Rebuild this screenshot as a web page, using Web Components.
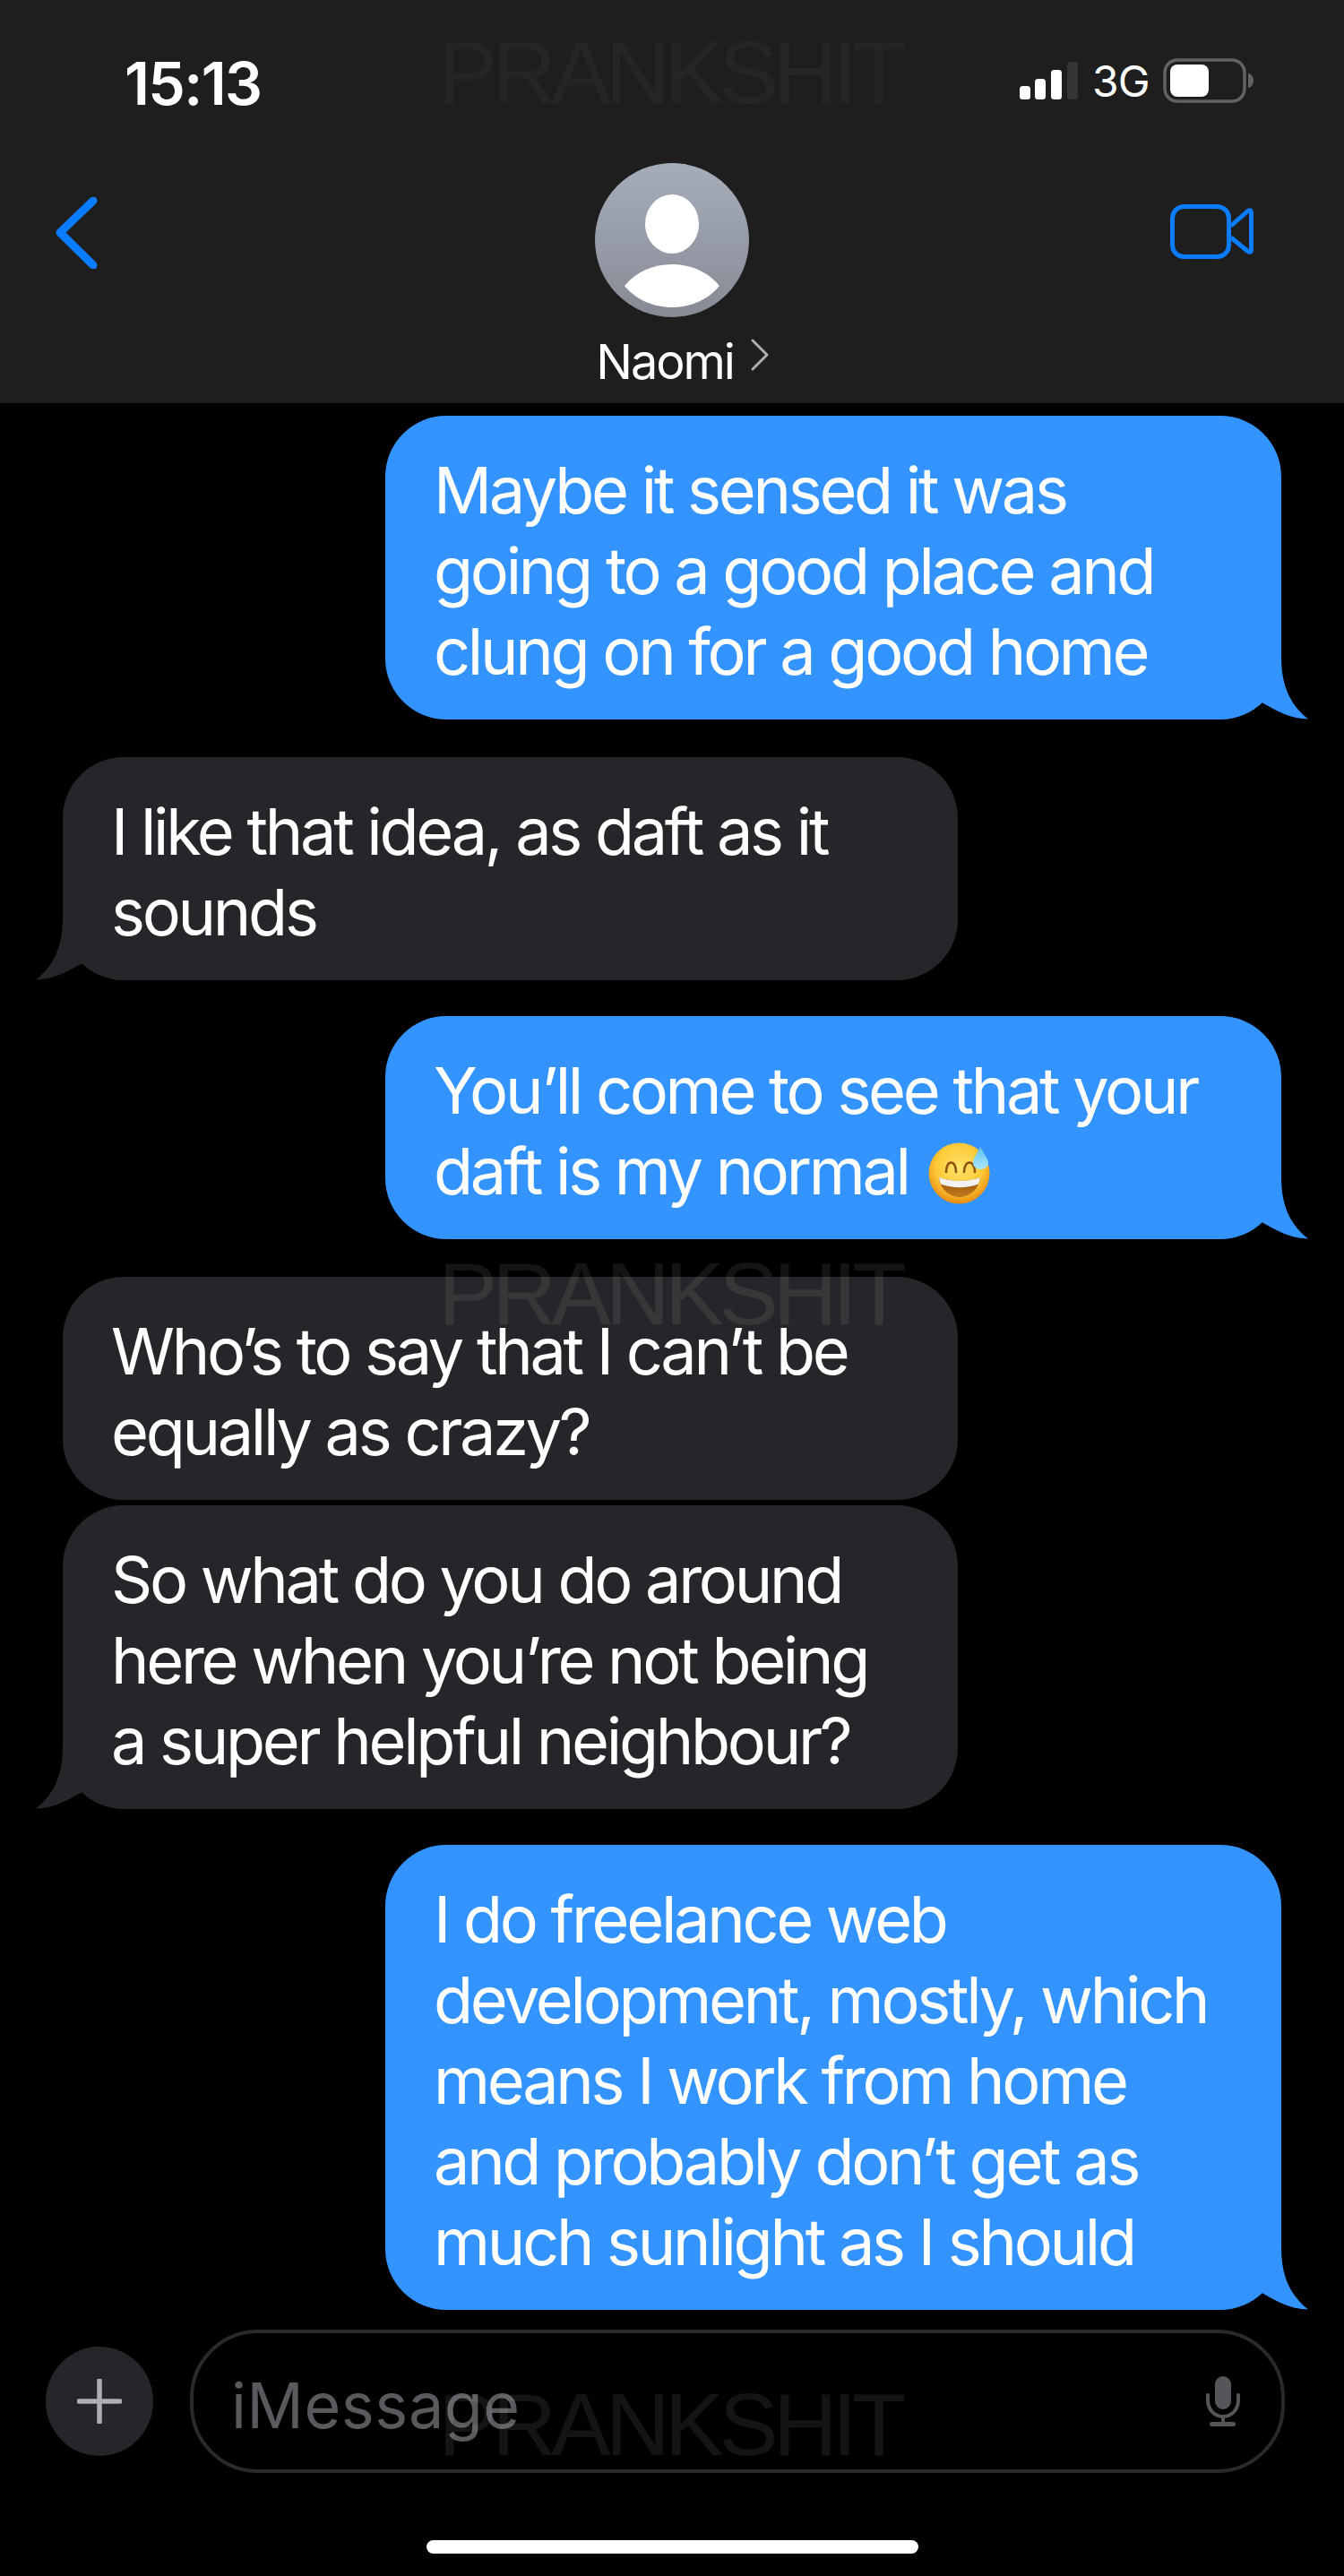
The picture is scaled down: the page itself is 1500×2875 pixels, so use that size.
<!DOCTYPE html>
<html><head><meta charset="utf-8">
<style>
html,body{margin:0;padding:0;background:#000}
body{width:1500px;height:2875px;overflow:hidden;font-family:Inter,"Liberation Sans",sans-serif;color:#fff}
</style></head><body>
<phone-screen>
  <chat-header slot="header" name="Naomi"></chat-header>
  <chat-bubble from="me" style="margin-top:14px">Maybe it sensed it was<br>going to a good place and<br>clung on for a good home</chat-bubble>
  <chat-bubble from="them" style="margin-top:42px">I like that idea, as daft as it<br>sounds</chat-bubble>
  <chat-bubble from="me" style="margin-top:40px">You’ll come to see that your<br>daft is my normal <sweat-emoji></sweat-emoji></chat-bubble>
  <chat-bubble from="them" notail style="margin-top:42px">Who’s to say that I can’t be<br>equally as crazy?</chat-bubble>
  <chat-bubble from="them" style="margin-top:6px">So what do you do around<br>here when you’re not being<br>a super helpful neighbour?</chat-bubble>
  <chat-bubble from="me" style="margin-top:40px">I do freelance web<br>development, mostly, which<br>means I work from home<br>and probably don’t get as<br>much sunlight as I should</chat-bubble>
  <chat-input slot="footer"></chat-input>
  <water-mark slot="overlay" style="top:31px;color:rgba(255,255,255,.035)">PRANKSHIT</water-mark>
  <water-mark slot="overlay" style="top:1394px">PRANKSHIT</water-mark>
  <water-mark slot="overlay" style="top:2656px">PRANKSHIT</water-mark>
</phone-screen>
<script>
function def(name, html){
  customElements.define(name, class extends HTMLElement{
    constructor(){super();this.attachShadow({mode:'open'}).innerHTML=html;}
  });
}
def('phone-screen',`<style>
:host{display:flex;flex-direction:column;position:relative;width:1500px;height:2875px;overflow:hidden;background:#000}
.msgs{display:flex;flex-direction:column;flex:none;height:2150px}
</style>
<slot name="header"></slot>
<div class="msgs"><slot></slot></div>
<slot name="footer"></slot>
<slot name="overlay"></slot>`);

def('water-mark',`<style>
:host{display:block;position:absolute;left:489px;width:530px;height:100px;
font:400 99px/100px "Liberation Sans",sans-serif;color:rgba(255,255,255,.08);white-space:nowrap;letter-spacing:-5.5px;pointer-events:none}
</style><slot></slot>`);

def('chat-header',`<style>
:host{display:block;height:450px;background:#1e1e1e;flex:none;box-sizing:border-box}
.status{display:flex;justify-content:space-between;align-items:flex-start;height:182px;box-sizing:border-box;padding:0 100px 0 139px}
.time{font:600 66px/72px Inter,sans-serif;letter-spacing:-1.6px;margin-top:57px}
.ind{display:flex;align-items:flex-start;margin-top:65px}
.g3{font:400 48px/50px Inter,sans-serif;letter-spacing:-1px;margin:1px 0 0 16px;width:79px;height:50px}
.nav{display:grid;grid-template-columns:1fr 172px 1fr;height:268px}
.back{padding:38px 0 0 60px}
.video{justify-self:end;padding:45px 98px 0 0}
.mid{display:flex;flex-direction:column;align-items:center;position:relative}
.name{display:flex;align-items:flex-start;white-space:nowrap;font:400 54px/60px Inter,sans-serif;letter-spacing:-2.1px;margin-top:20px;margin-left:24px}
.name svg{margin:3px 0 0 18px;flex:none}
svg{display:block}
</style>
<div class="status"><div class="time">15:13</div>
<div class="ind">
<svg width="66" height="46" viewBox="0 0 66 46"><rect x="1" y="31" width="12" height="15" rx="3.5" fill="#fff"/><rect x="18" y="23" width="12" height="23" rx="3.5" fill="#fff"/><rect x="36" y="13" width="12" height="33" rx="3.5" fill="#fff"/><rect x="54" y="4" width="12" height="42" rx="3.5" fill="#343434"/></svg>
<div class="g3">3G</div>
<svg width="102" height="50" viewBox="0 0 102 50"><rect x="2" y="2" width="89" height="46" rx="14" fill="none" stroke="#636363" stroke-width="3.5"/><rect x="8" y="7" width="43" height="36" rx="8" fill="#fff"/><path d="M95 17c3.5.5 6 3.5 6 8s-2.500 7.500-6 8z" fill="#636363"/></svg>
</div></div>
<div class="nav">
<div class="back"><svg width="50" height="80" viewBox="0 0 50 80"><path d="M44 4 7 39.5 44 76" fill="none" stroke="#0a7cff" stroke-width="9" stroke-linecap="round" stroke-linejoin="round"/></svg></div>
<div class="mid">
<svg width="172" height="172" viewBox="0 0 172 172"><defs><linearGradient id="av" x1="0" y1="0" x2="0" y2="1"><stop offset="0" stop-color="#a6adba"/><stop offset="1" stop-color="#868a95"/></linearGradient></defs><circle cx="86" cy="86" r="86" fill="url(#av)"/><ellipse cx="86" cy="68" rx="30" ry="33" fill="#fff"/><path d="M33 137C46 121 65 113 86 113s40 8 53 24c-12 15-32 24-53 24s-41-9-53-24z" fill="#fff"/></svg>
<div class="name">Naomi<svg width="22" height="38" viewBox="0 0 22 38"><path d="M3 3 19 19 3 35" fill="none" stroke="#b0b0b0" stroke-width="3" stroke-linecap="round" stroke-linejoin="round"/></svg></div>
</div>
<div class="video"><svg width="98" height="66" viewBox="0 0 98 66"><rect x="4.5" y="3.5" width="63" height="56" rx="13" fill="none" stroke="#0a7cff" stroke-width="5"/><path d="M71 24 88 9Q92.5 5.5 92.5 11V51Q92.5 56.5 88 53L71 39" fill="none" stroke="#0a7cff" stroke-width="5" stroke-linejoin="round" stroke-linecap="round"/></svg></div>
</div>`);

def('sweat-emoji',`<style>
:host{display:inline-block;width:69px;height:69px;vertical-align:-11px;margin-left:5px}
svg{display:block}
</style>
<svg width="69" height="69" viewBox="0 0 69 69"><defs>
<radialGradient id="f" cx=".5" cy=".4" r=".62"><stop offset="0" stop-color="#ffe36b"/><stop offset=".62" stop-color="#fdc936"/><stop offset="1" stop-color="#e8860f"/></radialGradient>
<linearGradient id="d" x1="0" y1="0" x2="0" y2="1"><stop offset="0" stop-color="#5fc0f0"/><stop offset="1" stop-color="#a8e6fb"/></linearGradient>
<linearGradient id="m" x1="0" y1="0" x2="0" y2="1"><stop offset="0" stop-color="#8f5210"/><stop offset="1" stop-color="#c47a1c"/></linearGradient></defs>
<circle cx="34.5" cy="34.5" r="34" fill="url(#f)"/>
<path d="M12 39Q35 47 58 39C57 52 46 61 35 61S13 52 12 39z" fill="url(#m)"/>
<path d="M12 39Q35 47 58 39 57.5 43 56 46.5 35 54 14 46.5 12.5 43 12 39z" fill="#f2f2f2"/>
<path d="M20 33c0-14 11-14 11 0M40 33c0-14 12-14 12 0" fill="none" stroke="#8c5210" stroke-width="2.6" stroke-linecap="round"/>
<path d="M58 4C60 11 67 17 67 23 67 27 63 30 58.5 30S50 27 50 23C50 17 56 11 58 4z" fill="url(#d)"/>
</svg>`);

def('chat-bubble',`<style>
:host{display:block;position:relative;box-sizing:border-box;width:1000px;padding:38px 0 31px 54px;border-radius:68px;
font:400 72px/90px Inter,sans-serif;letter-spacing:-3.3px;color:#fff;white-space:nowrap;flex:none}
:host([from=me]){background:#3393ff;margin-left:430px}
:host([from=them]){background:#26262a;margin-left:70px;width:999px}
svg{position:absolute;bottom:0;display:block}
:host([from=me]) svg{right:-30px;color:#3393ff}
:host([from=them]) svg{left:-30px;color:#26262a;transform:scaleX(-1)}
:host([notail]) svg{display:none}
</style><slot></slot>
<svg width="100" height="70" viewBox="0 0 100 70"><path d="M70 0C70 30 78 52 100 69.5 84 69 72 65 43 48 40 30 50 10 70 0z" fill="currentColor"/></svg>`);

def('chat-input',`<style>
:host{display:block;position:relative;height:275px;flex:none}
.row{display:flex;align-items:center;padding:0 66px 0 51px;gap:41px;box-sizing:border-box}
.plus{flex:none;width:120px;height:122px;border-radius:50%;background:#26262a;display:flex;align-items:center;justify-content:center}
.pill{flex:1;height:160px;box-sizing:border-box;border:4.5px solid #2a2a2c;border-radius:76px;display:flex;align-items:center;justify-content:space-between;padding:0 43px 0 42px}
.ph{font:400 70px/90px Inter,sans-serif;letter-spacing:.6px;color:#59595e;margin-top:9px}
.home{width:549px;height:15px;background:#fff;border-radius:8px;margin:75px auto 0}
svg{display:block}
</style>
<div class="row"><div class="plus"><svg width="50" height="50" viewBox="0 0 50 50"><path d="M25 2V48M2 25H48" stroke="#aeaeb2" stroke-width="5.5" stroke-linecap="round"/></svg></div>
<div class="pill"><span class="ph">iMessage</span>
<svg width="44" height="62" viewBox="0 0 44 62"><rect x="13" y="3" width="18" height="37" rx="9" fill="#55555a"/><path d="M5 24V28C4.5 40 12 48 22 48S39.5 40 39 28V24" fill="none" stroke="#55555a" stroke-width="4" stroke-linecap="round"/><path d="M22 48V56" stroke="#55555a" stroke-width="4"/><rect x="7" y="54" width="29" height="5" rx="2.5" fill="#55555a"/></svg>
</div></div>
<div class="home"></div>`);
</script>
</body></html>
